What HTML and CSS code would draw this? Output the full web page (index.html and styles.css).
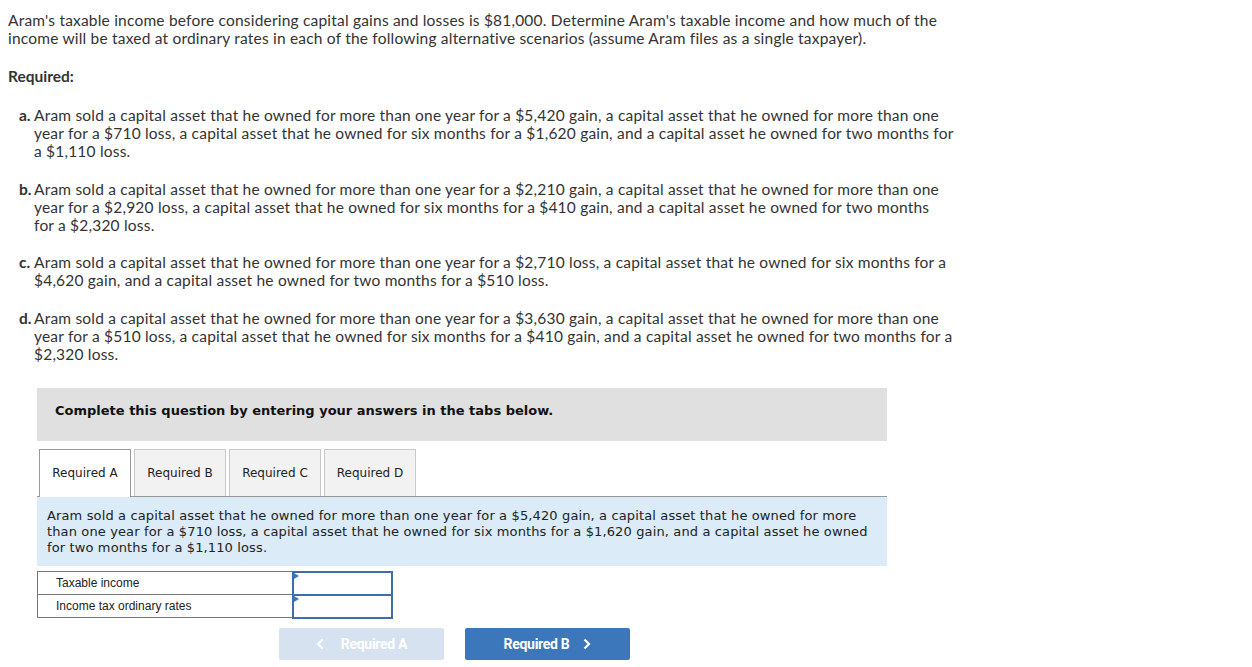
FILE: index.html
```html
<!DOCTYPE html>
<html>
<head>
<meta charset="utf-8">
<link rel="stylesheet" href="styles.css">
</head>
<body>
<div class="page">
  <p class="intro">Aram's taxable income before considering capital gains and losses is $81,000. Determine Aram's taxable income and how much of the income will be taxed at ordinary rates in each of the following alternative scenarios (assume Aram files as a single taxpayer).</p>
  <p class="req-title">Required:</p>
  <ol class="parts">
    <li><span class="lbl">a.</span><span class="txt">Aram sold a capital asset that he owned for more than one year for a $5,420 gain, a capital asset that he owned for more than one year for a $710 loss, a capital asset that he owned for six months for a $1,620 gain, and a capital asset he owned for two months for a $1,110 loss.</span></li>
    <li><span class="lbl">b.</span><span class="txt">Aram sold a capital asset that he owned for more than one year for a $2,210 gain, a capital asset that he owned for more than one year for a $2,920 loss, a capital asset that he owned for six months for a $410 gain, and a capital asset he owned for two months<br>for a $2,320 loss.</span></li>
    <li><span class="lbl">c.</span><span class="txt">Aram sold a capital asset that he owned for more than one year for a $2,710 loss, a capital asset that he owned for six months for a $4,620 gain, and a capital asset he owned for two months for a $510 loss.</span></li>
    <li><span class="lbl">d.</span><span class="txt">Aram sold a capital asset that he owned for more than one year for a $3,630 gain, a capital asset that he owned for more than one year for a $510 loss, a capital asset that he owned for six months for a $410 gain, and a capital asset he owned for two months for a $2,320 loss.</span></li>
  </ol>

  <div class="widget">
    <div class="banner">Complete this question by entering your answers in the tabs below.</div>
    <div class="tabs">
      <div class="tab active">Required A</div>
      <div class="tab">Required B</div>
      <div class="tab">Required C</div>
      <div class="tab">Required D</div>
    </div>
    <div class="panel">Aram sold a capital asset that he owned for more than one year for a $5,420 gain, a capital asset that he owned for more than one year for a $710 loss, a capital asset that he owned for six months for a $1,620 gain, and a capital asset he owned for two months for a $1,110 loss.</div>
    <table class="answers">
      <tr><td class="label">Taxable income</td><td class="input"><span class="flag"></span></td></tr>
      <tr><td class="label">Income tax ordinary rates</td><td class="input"><span class="flag"></span></td></tr>
    </table>
    <div class="nav">
      <button class="btn prev"><svg class="chev" width="8" height="12" viewBox="0 0 8 12"><path d="M6.5 1.5 L2 6 L6.5 10.5" fill="none" stroke="#fff" stroke-width="2.2"/></svg>Required A</button>
      <button class="btn next">Required B<svg class="chev" width="8" height="12" viewBox="0 0 8 12"><path d="M1.5 1.5 L6 6 L1.5 10.5" fill="none" stroke="#fff" stroke-width="2.2"/></svg></button>
    </div>
  </div>
</div>
</body>
</html>
```
FILE: styles.css
```css
* { box-sizing: border-box; }
body {
  margin: 0;
  background: #fff;
  color: #333;
  font-family: Lato, "Open Sans", Arial, sans-serif;
}
.page {
  padding: 11px 8px 0 8px;
  width: 980px;
}
.intro, .req-title, .parts li {
  font-size: 15.5px;
  letter-spacing: 0.2px;
  line-height: 18px;
}
.intro {
  margin: 0;
  width: 945px;
}
.req-title {
  margin: 20px 0 0 0;
  font-weight: bold;
  letter-spacing: 0;
}
.parts {
  list-style: none;
  margin: 21px 0 0 0;
  padding: 0 0 0 11px;
}
.parts li {
  display: flex;
  margin-bottom: 19.5px;
}
.parts .lbl {
  width: 15px;
  flex: none;
  font-weight: bold;
  letter-spacing: 0;
}
.parts .txt {
  width: 920px;
}
.widget {
  margin: 25px 0 0 29px;
  width: 850px;
  font-family: "DejaVu Sans", Verdana, sans-serif;
}
.banner {
  background: #e0e0e0;
  height: 53px;
  padding: 14px 18px 0 18px;
  font-size: 13px;
  font-weight: bold;
  color: #111;
  line-height: 18px;
}
.tabs {
  display: flex;
  gap: 3px;
  margin-top: 8px;
  padding-left: 2px;
  border-bottom: 1px solid #999;
  height: 48px;
}
.tab {
  width: 92px;
  height: 47px;
  background: #f2f2f2;
  border: 1px solid #c8c8c8;
  border-bottom: none;
  font-size: 12px;
  color: #222;
  display: flex;
  align-items: center;
  justify-content: center;
}
.tab.active {
  background: #fff;
  border-color: #999;
  height: 48px;
}
.panel {
  background: #dbebf8;
  padding: 11px 10px 10px 10px;
  font-size: 13px;
  letter-spacing: 0.13px;
  line-height: 16px;
  color: #222;
}
.answers {
  margin-top: 5px;
  border-collapse: collapse;
  font-family: "Liberation Sans", Arial, sans-serif;
  font-size: 12px;
  color: #222;
}
.answers td {
  height: 23px;
  padding: 0;
}
.answers .label {
  width: 255px;
  border: 1px solid #777;
  padding-left: 18px;
}
.answers .input {
  width: 99px;
  border: 2px solid #3e6ea8;
  position: relative;
}
.flag {
  position: absolute;
  left: 0;
  top: 0;
  width: 0;
  height: 0;
  border-top: 3px solid transparent;
  border-bottom: 3px solid transparent;
  border-left: 5px solid #3e77c0;
}
.nav {
  display: flex;
  gap: 21px;
  margin-top: 9px;
  padding-left: 242px;
}
.btn {
  width: 165px;
  height: 32px;
  border: none;
  border-radius: 2px;
  font-family: Roboto, Arial, sans-serif;
  font-weight: bold;
  font-size: 14px;
  letter-spacing: -0.3px;
  color: #fff;
  display: flex;
  align-items: center;
  justify-content: center;
}
.prev {
  background: #d6e2f0;
}
.prev .chev { margin-right: 17px; }
.next {
  background: #3b77ba;
}
.next .chev { margin-left: 14px; }
```
